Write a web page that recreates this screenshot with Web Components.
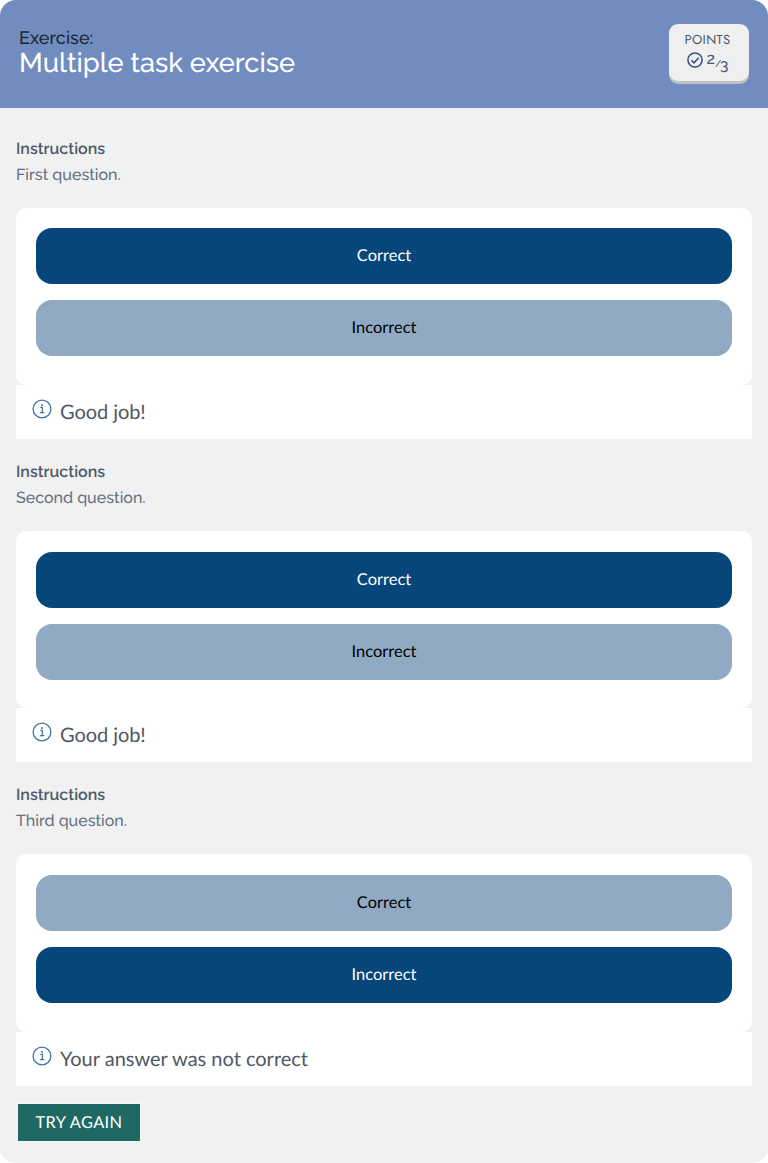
<!DOCTYPE html>
<html lang="en">
<head>
<meta charset="utf-8">
<title>Multiple task exercise</title>
<style>
  body { margin: 0; background: #fff; font-family: Raleway, Lato, sans-serif; text-rendering: geometricPrecision; }
</style>
</head>
<body>
<exercise-card>
  <exercise-header slot="header" kicker="Exercise:" heading="Multiple task exercise">
    <points-badge score="2" total="3"></points-badge>
  </exercise-header>
  <exercise-task question="First question." question-width="104.8" selected="correct" feedback="Good job!" feedback-width="85.6"></exercise-task>
  <exercise-task question="Second question." question-width="129.6" selected="correct" feedback="Good job!" feedback-width="85.6"></exercise-task>
  <exercise-task question="Third question." question-width="111" selected="incorrect" feedback="Your answer was not correct" feedback-width="248"></exercise-task>
  <action-button slot="footer"><fit-text width="85.5">TRY AGAIN</fit-text></action-button>
</exercise-card>
<script>
  class Base extends HTMLElement {
    connectedCallback() {
      if (!this.shadowRoot) this.attachShadow({ mode: 'open' }).innerHTML = this.render();
    }
    attr(name) { return this.getAttribute(name) || ''; }
  }

  /* Single line of text whose tracking is adjusted to a given advance width. */
  customElements.define('fit-text', class extends Base {
    render() {
      return `<style>:host{display:inline-block;white-space:pre}span{display:inline-block}</style><span><slot></slot></span>`;
    }
    connectedCallback() {
      super.connectedCallback();
      const span = this.shadowRoot.querySelector('span');
      const target = parseFloat(this.attr('width'));
      const n = this.textContent.length;
      if (target && n) span.style.letterSpacing = ((target - span.getBoundingClientRect().width) / n) + 'px';
    }
  });

  customElements.define('exercise-card', class extends Base {
    render() {
      return `<style>
        :host{display:flex;flex-direction:column;box-sizing:border-box;height:1163px;background:#f1f1f1;border-radius:16px;overflow:hidden}
        main{padding:7.8px 16px 0}
        footer{padding:16.3px 16px 0}
      </style><slot name="header"></slot><main><slot></slot></main><footer><slot name="footer"></slot></footer>`;
    }
  });

  customElements.define('exercise-header', class extends Base {
    render() {
      return `<style>
        :host{display:flex;justify-content:space-between;align-items:flex-start;box-sizing:border-box;height:108px;padding:24px 19px 0 19px;background:#718dbf}
        .titles{display:flex;flex-direction:column;align-items:flex-start;padding-top:4px;font-weight:500}
        .kicker{font-size:18px;line-height:22px;color:#1b2733}
        .heading{font-size:27.2px;line-height:27px;color:#fff}
      </style>
      <div class="titles"><fit-text class="kicker" width="74.3">${this.attr('kicker')}</fit-text>
      <fit-text class="heading" width="276">${this.attr('heading')}</fit-text></div><slot></slot>`;
    }
  });

  customElements.define('points-badge', class extends Base {
    render() {
      return `<style>
        :host{display:flex;flex-direction:column;align-items:flex-start;box-sizing:border-box;width:80px;height:57px;padding:8px 0 0 15.5px;border-radius:9px;background:#efefef;box-shadow:0 3px 0 #c1c1bf;color:#4d586a}
        .label{font:13px/15px Jost,"Josefin Sans",Lato,sans-serif}
        .row{display:flex;align-items:flex-start;padding:4px 0 0 2.5px;height:24px;font-weight:500}
        svg{display:block;margin:1px 3.5px 0 0}
        .n{font-size:16px;line-height:16px}
        .slash{font-size:10px;line-height:16px;padding:6px 0 0 0}
        .d{font-size:15.5px;line-height:16px;padding-top:6px;margin-left:-1.5px}
      </style>
      <fit-text class="label" width="46">POINTS</fit-text>
      <div class="row">
        <svg width="16" height="16" viewBox="0 0 16 16" fill="none" stroke="#354d80" stroke-width="1.5"><circle cx="8" cy="8" r="7.1"/><path d="M4.4 8.2 7 10.8l4.7-5"/></svg>
        <span class="n">${this.attr('score')}</span><span class="slash">/</span><span class="d">${this.attr('total')}</span>
      </div>`;
    }
  });

  customElements.define('answer-option', class extends Base {
    render() {
      return `<style>
        :host{display:flex;align-items:center;justify-content:center;box-sizing:border-box;height:56px;border-radius:16px;background:#91aac4;color:#000;font:16.4px/24px Lato,sans-serif;padding-top:.4px}
        :host([selected]){background:#07467b;color:#fff}
      </style><slot></slot>`;
    }
  });

  customElements.define('task-feedback', class extends Base {
    render() {
      return `<style>
        :host{display:flex;align-items:flex-start;box-sizing:border-box;height:54px;background:#fff;padding:14px 16px 0;color:#505866;font:20px/26px Lato,sans-serif}
        svg{display:block;flex:none;margin-right:8px}
      </style>
      <svg width="20" height="20" viewBox="0 0 20 20" fill="none" stroke="#3f74a3"><circle cx="10" cy="10" r="8.9" stroke-width="1.3"/><path d="M8.3 8.3h2v5.2M7.9 13.7h4.3" stroke-width="1.2"/><circle cx="10" cy="5.9" r="1" fill="#3f74a3" stroke="none"/></svg>
      <slot></slot>`;
    }
  });

  customElements.define('exercise-task', class extends Base {
    render() {
      const s = this.attr('selected');
      return `<style>
        :host{display:block}
        .intro{display:flex;flex-direction:column;align-items:flex-start;box-sizing:border-box;height:91.9px;padding-top:19.8px;font-size:16px;font-weight:500;line-height:26px;color:#667080}
        .label{font-weight:600;color:#4e596b}
        .panel{display:flex;flex-direction:column;gap:16px;box-sizing:border-box;height:177.4px;padding:20.6px 20px 0;border-radius:10px;background:#fff}
      </style>
      <div class="intro"><fit-text class="label" width="89.1">Instructions</fit-text>
      <fit-text width="${this.attr('question-width')}">${this.attr('question')}</fit-text></div>
      <div class="panel">
        <answer-option ${s === 'correct' ? 'selected' : ''}><fit-text width="54.4">Correct</fit-text></answer-option>
        <answer-option ${s === 'incorrect' ? 'selected' : ''}><fit-text width="64.8">Incorrect</fit-text></answer-option>
      </div>
      <task-feedback><fit-text width="${this.attr('feedback-width')}">${this.attr('feedback')}</fit-text></task-feedback>`;
    }
  });

  customElements.define('action-button', class extends Base {
    render() {
      return `<style>
        :host{display:flex;align-items:center;justify-content:center;box-sizing:border-box;width:126px;height:41px;padding-top:1.5px;border:2px solid #f1f6f6;background:#1f6964;color:#fff;font:16.4px/24px Lato,sans-serif}
      </style><slot></slot>`;
    }
  });
</script>
</body>
</html>
